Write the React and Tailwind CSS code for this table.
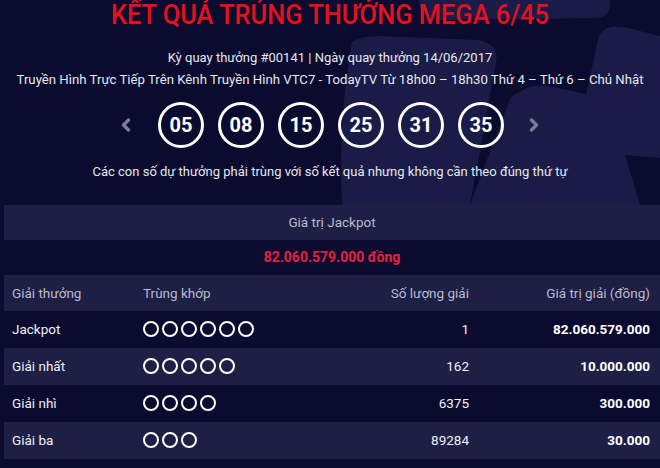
import { ChevronLeft, ChevronRight } from "lucide-react";

const balls = ["05", "08", "15", "25", "31", "35"];

const prizes = [
  { name: "Jackpot", match: 6, count: "1", value: "82.060.579.000" },
  { name: "Giải nhất", match: 5, count: "162", value: "10.000.000" },
  { name: "Giải nhì", match: 4, count: "6375", value: "300.000" },
  { name: "Giải ba", match: 3, count: "89284", value: "30.000" },
];

const BallDecor = () => (
  <svg
    className="absolute left-0 top-0 pointer-events-none"
    width="660"
    height="205"
    viewBox="0 0 660 205"
  >
    <g fill="#1a1c47">
      <path d="M418 0 L610 0 Q612 16 596 18 L440 20 Q420 18 418 0 Z" />
      <path d="M352 42 Q360 36 380 36 L478 40 Q500 44 496 62 L470 205 L342 205 Q338 120 352 42 Z" />
      <path d="M520 92 Q530 84 548 86 L596 96 Q610 102 614 118 L640 205 L470 205 L508 104 Q512 94 520 92 Z" />
      <path d="M604 30 Q612 24 628 28 L660 36 L660 158 L590 152 Q574 148 578 132 L598 40 Q600 33 604 30 Z" />
    </g>
  </svg>
);

const App = () => {
  return (
    <div
      className="relative w-[660px] h-[468px] overflow-hidden bg-[#0a0b2f] text-[#e6e7ef]"
      style={{ fontFamily: "Roboto, 'Noto Sans', sans-serif" }}
    >
      <BallDecor />
      <div className="relative flex flex-col items-center">
        <h1 className="h-[28px] pt-[2px] text-[27px] leading-[27px] font-medium text-[#e3111f] whitespace-nowrap scale-x-[0.94]">
          KẾT QUẢ TRÚNG THƯỞNG MEGA 6/45
        </h1>
        <p className="mt-[22px] text-[13px] leading-[16px] whitespace-nowrap">
          Kỳ quay thưởng #00141 | Ngày quay thưởng 14/06/2017
        </p>
        <p className="mt-[6px] text-[13.2px] leading-[16px] whitespace-nowrap">
          Truyền Hình Trực Tiếp Trên Kênh Truyền Hình VTC7 - TodayTV Từ 18h00
          – 18h30 Thứ 4 – Thứ 6 – Chủ Nhật
        </p>
        <div className="mt-[14px] flex items-center h-[46px]">
          <ChevronLeft
            size={20}
            strokeWidth={4}
            className="text-[#7b7d98] mr-[22px]"
          />
          <div className="flex gap-[14px]">
            {balls.map((b) => (
              <div
                key={b}
                className="w-[46px] h-[46px] rounded-full border-[3px] border-white flex items-center justify-center text-[20px] font-bold text-white"
              >
                {b}
              </div>
            ))}
          </div>
          <ChevronRight
            size={20}
            strokeWidth={4}
            className="text-[#7b7d98] ml-[20px]"
          />
        </div>
        <p className="mt-[16px] text-[13px] leading-[16px] whitespace-nowrap">
          Các con số dự thưởng phải trùng với số kết quả nhưng không cần theo
          đúng thứ tự
        </p>
      </div>

      <div className="relative mt-[25px] ml-[4px] text-[13.5px]">
        <div className="h-[35px] bg-[#1e1f45] flex items-center justify-center text-[#b9bacd]">
          Giá trị Jackpot
        </div>
        <div className="h-[35px] flex items-center justify-center text-[14px] font-bold text-[#e4223f]">
          82.060.579.000 đồng
        </div>
        <div className="h-[36px] bg-[#1e1f45] flex items-center text-[#b9bacd]">
          <div className="w-[139px] pl-[8px]">Giải thưởng</div>
          <div className="flex-1">Trùng khớp</div>
          <div className="w-[150px] text-right">Số lượng giải</div>
          <div className="w-[191px] pr-[10px] text-right">
            Giá trị giải (đồng)
          </div>
        </div>
        {prizes.map((p, i) => (
          <div
            key={p.name}
            className={
              "h-[37px] flex items-center text-[#f0f0f5] " +
              (i % 2 === 1 ? "bg-[#1e1f45]" : "")
            }
          >
            <div className="w-[139px] pl-[8px]">{p.name}</div>
            <div className="flex-1 flex gap-[3px] -mt-[2px]">
              {Array.from({ length: p.match }).map((_, k) => (
                <span
                  key={k}
                  className="w-[16px] h-[16px] rounded-full border-[2.5px] border-white"
                />
              ))}
            </div>
            <div className="w-[150px] text-right">{p.count}</div>
            <div className="w-[191px] pr-[10px] text-right font-bold text-white">
              {p.value}
            </div>
          </div>
        ))}
      </div>
    </div>
  );
};

export default App;
